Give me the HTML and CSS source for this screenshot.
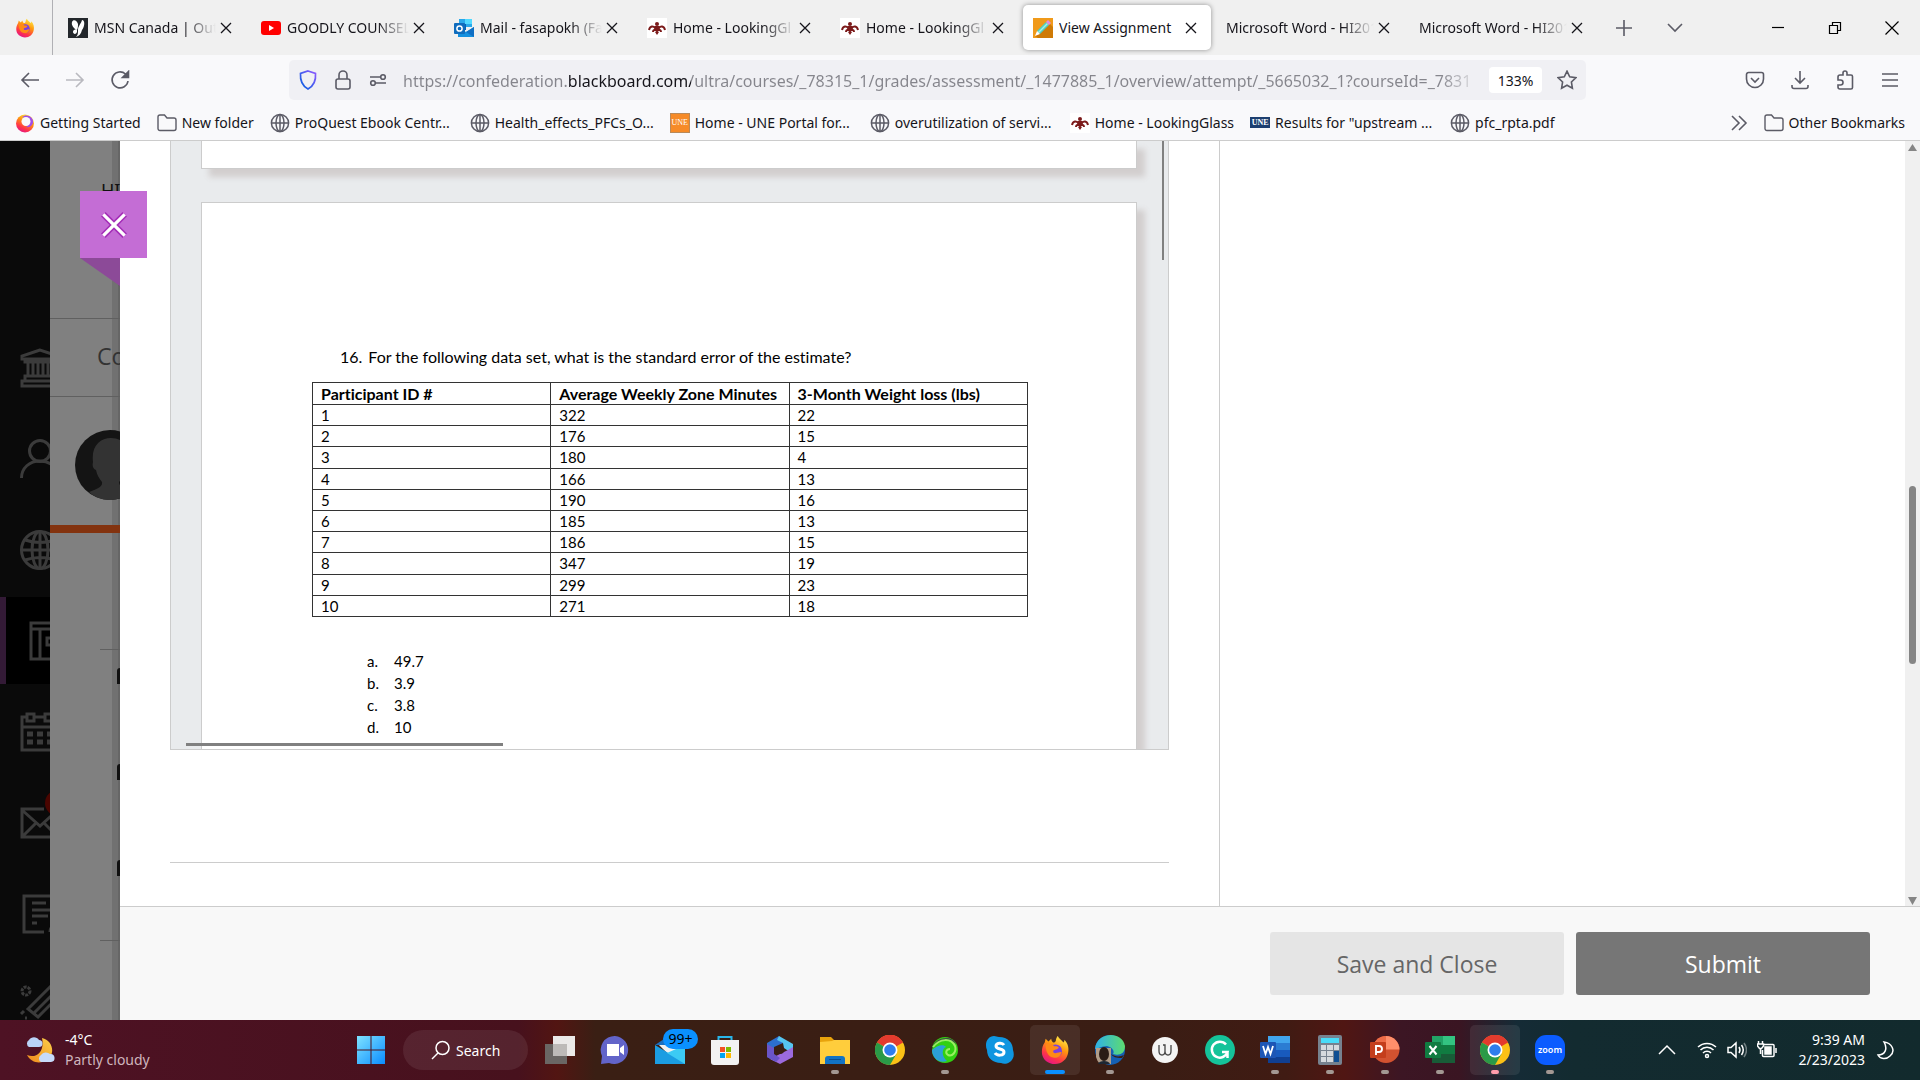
FILE: index.html
```html
<!DOCTYPE html>
<html lang="en">
  <head>
    <meta charset="utf-8" />
    <title>View Assignment</title>
    <link rel="stylesheet" href="styles.css">
  </head>
  <body>
    <!-- shared icons -->
    <svg class="sprite" aria-hidden="true">
      <defs>
        <linearGradient id="gFox" x1="0.8" y1="0" x2="0.3" y2="1">
          <stop offset="0" stop-color="#fff44f" />
          <stop offset="0.4" stop-color="#ff980e" />
          <stop offset="0.75" stop-color="#ff3647" />
          <stop offset="1" stop-color="#e31587" />
        </linearGradient>
        <linearGradient id="gShield" x1="0" y1="1" x2="1" y2="0">
          <stop offset="0" stop-color="#0060df" />
          <stop offset="1" stop-color="#9059ff" />
        </linearGradient>
        <linearGradient id="gWin" x1="0" y1="0" x2="1" y2="1">
          <stop offset="0" stop-color="#7fe3ff" />
          <stop offset="1" stop-color="#0a8cff" />
        </linearGradient>
        <linearGradient id="gWave" x1="0" y1="0" x2="1" y2="0">
          <stop offset="0" stop-color="#2fb0e6" />
          <stop offset="1" stop-color="#5ddc70" />
        </linearGradient>
        <linearGradient id="gMoon" x1="1" y1="0" x2="0" y2="1">
          <stop offset="0" stop-color="#fbd04a" />
          <stop offset="1" stop-color="#f08a1c" />
        </linearGradient>
      </defs>
      <symbol id="i-x" viewBox="0 0 20 20"><path d="M5 5l10 10M15 5L5 15" fill="none" stroke="currentColor" stroke-width="1.3" /></symbol>
      <symbol id="i-globe" viewBox="0 0 20 20">
        <g fill="none" stroke="#5b5b66" stroke-width="1.5"><circle cx="10" cy="10" r="8.6" /><ellipse cx="10" cy="10" rx="4" ry="8.6" /><path d="M1.5 10h17M10 1.5v17" /></g>
      </symbol>
      <symbol id="i-folder" viewBox="0 0 20 20"><path d="M1 4a2 2 0 0 1 2-2h4.500l2.500 3h7a2 2 0 0 1 2 2v8.500a2 2 0 0 1-2 2H3a2 2 0 0 1-2-2z" fill="none" stroke="#5b5b66" stroke-width="1.4" /></symbol>
      <symbol id="i-firefox" viewBox="0 0 32 32">
        <path d="M19 1c1 3 4 4 6 7 1-1 1-2 1-3 4 4 5 9 4 14-1 7-7 12-14 12S2 26 2 18c0-4 1-7 3-10l1-4 3 3 3-3c0 2 1 3 2 4 2 0 3-1 3-3 0-1 1-3 2-4z" fill="url(#gFox)" />
        <circle cx="16.500" cy="17" r="7" fill="#7a3fe0" />
        <path d="M6 10c4-2 8 0 9 2 2 0 4 0 5 1-1 3-5 2-6 4 0 2 2 3 4 2 3-1 5-1 5-1-1 5-5 7-9 6C8 23 6 16 6 10z" fill="#ff8a16" />
      </symbol>
      <symbol id="i-bird" viewBox="0 0 20 20">
        <path fill="#fff" d="M0 0h20v20H0z" />
        <circle cx="10" cy="6" r="2" fill="#7b1a1a" />
        <path fill="none" stroke="#7b1a1a" stroke-width="2" d="M2 12c1-4 4-5 8-1 4-4 7-3 8 1M6 14c0-2 2-3 4-1 2-2 4-1 4 1" />
        <path fill="#7b1a1a" d="M8 8h4l1 3-3 3-3-3zM8 14h4l-2 3z" />
      </symbol>
      <symbol id="i-chrome" viewBox="0 0 30 30">
        <circle cx="15" cy="15" r="15" fill="#fbc116" />
        <path d="M15 15L2 7.500A15 15 0 0 1 28 7.500z" fill="#e33b2e" />
        <path d="M15 7.500h13a15 15 0 0 0-26 0z" fill="#e33b2e" />
        <path d="M2 7.500A15 15 0 0 0 15 30l6.500-11.200L15 15z" fill="#2a9a48" />
        <circle cx="15" cy="15" r="7.500" fill="#fff" />
        <circle cx="15" cy="15" r="5.800" fill="#2f7ded" />
      </symbol>
    </svg>

    <header class="browser">
      <div class="tab-bar">
        <button class="firefox-view" aria-label="Firefox View"><svg class="ico20"><use href="#i-firefox" /></svg></button>
        <div class="tabs">
          <div class="tab">
            <svg class="ico20" viewBox="0 0 20 20"><path fill="#23272b" d="M0 0h20v20H0z" /><path fill="#fff" d="M9 12C6 11 3 7 4 4c1-3 5-2 6 2 0 2 0 4-1 6zM9 12c-2-1-4 0-4 2s3 3 4 0zM10 12c0-4 3-6 4-10 3 0 3 6 0 10-1 4-3 6-6 7 2-2 2-4 2-7z" /></svg>
            <button class="tab-title">MSN Canada | Outl</button>
            <button class="tab-close" aria-label="Close tab"><svg class="ico20"><use href="#i-x" /></svg></button>
          </div>
          <div class="tab">
            <svg class="ico20" viewBox="0 0 20 20"><rect y="3" width="20" height="14" rx="3" fill="#f00" /><path d="M8 7l5 3-5 3z" fill="#fff" /></svg>
            <button class="tab-title">GOODLY COUNSEL</button>
            <button class="tab-close" aria-label="Close tab"><svg class="ico20"><use href="#i-x" /></svg></button>
          </div>
          <div class="tab">
            <svg class="ico20" viewBox="0 0 20 20"><path d="M5 1h13v8H5z" fill="#28a8ea" /><path d="M11 1h7v5h-7z" fill="#50d9ff" /><path d="M5 6h7v6H5z" fill="#0364b8" /><path d="M4 9l8 5 8-5v10H4z" fill="#1490df" /><path d="M20 9v10l-8-5z" fill="#0f6fc4" /><rect y="5" width="11" height="11" rx="1" fill="#0f6cbd" /><circle cx="5.500" cy="10.500" r="2.600" fill="none" stroke="#fff" stroke-width="1.500" /></svg>
            <button class="tab-title">Mail - fasapokh (Fa</button>
            <button class="tab-close" aria-label="Close tab"><svg class="ico20"><use href="#i-x" /></svg></button>
          </div>
          <div class="tab">
            <svg class="ico20"><use href="#i-bird" /></svg>
            <button class="tab-title">Home - LookingGl</button>
            <button class="tab-close" aria-label="Close tab"><svg class="ico20"><use href="#i-x" /></svg></button>
          </div>
          <div class="tab">
            <svg class="ico20"><use href="#i-bird" /></svg>
            <button class="tab-title">Home - LookingGl</button>
            <button class="tab-close" aria-label="Close tab"><svg class="ico20"><use href="#i-x" /></svg></button>
          </div>
          <div class="tab active">
            <svg class="ico20" viewBox="0 0 20 20"><path fill="#f09a1a" d="M0 0h20v20H0z" /><path fill="#cf7a05" d="M17 6l3 3v11H5l-3-2z" /><path fill="#4fd0c4" d="M4 13L13 4l3 3-9 9z" /><path fill="#a8efe4" d="M5 14l9-9 1 1-9 9z" /><path fill="#e08adf" d="M13 4l2-2 3 3-2 2z" /><path fill="#fff" d="M4 13l3 3-5 2z" /></svg>
            <button class="tab-title">View Assignment</button>
            <button class="tab-close" aria-label="Close tab"><svg class="ico20"><use href="#i-x" /></svg></button>
          </div>
          <div class="tab">
            <button class="tab-title">Microsoft Word - HI201</button>
            <button class="tab-close" aria-label="Close tab"><svg class="ico20"><use href="#i-x" /></svg></button>
          </div>
          <div class="tab">
            <button class="tab-title">Microsoft Word - HI201</button>
            <button class="tab-close" aria-label="Close tab"><svg class="ico20"><use href="#i-x" /></svg></button>
          </div>
        </div>
        <div class="tab-tools">
          <button class="icon-btn" aria-label="New tab"><svg class="ico20" viewBox="0 0 20 20"><path d="M10 2v16M2 10h16" /></svg></button>
          <button class="icon-btn" aria-label="List all tabs"><svg class="ico20" viewBox="0 0 20 20"><path d="M3 6l7 7 7-7" /></svg></button>
        </div>
        <div class="window-tools">
          <button class="icon-btn" aria-label="Minimize"><svg class="ico20" viewBox="0 0 20 20"><path d="M4 9.500h12" /></svg></button>
          <button class="icon-btn" aria-label="Restore"><svg class="ico20" viewBox="0 0 20 20"><path d="M4.500 7.500h8v8h-8zM7.500 7V4.500h8v8H13" /></svg></button>
          <button class="icon-btn" aria-label="Close window"><svg class="ico20" viewBox="0 0 20 20"><path d="M3.500 3.500l13 13M16.500 3.500l-13 13" /></svg></button>
        </div>
      </div>

      <div class="nav-bar">
        <div class="nav-group">
          <button class="icon-btn" aria-label="Back"><svg class="ico20" viewBox="0 0 20 20"><path d="M19 10H2M9 3l-7 7 7 7" /></svg></button>
          <button class="icon-btn dim" aria-label="Forward"><svg class="ico20" viewBox="0 0 20 20"><path d="M1 10h17M11 3l7 7-7 7" /></svg></button>
          <button class="icon-btn" aria-label="Reload"><svg class="ico20" viewBox="0 0 20 20"><path d="M18 11a8 8 0 1 1-2.500-7l1.500 1.500" /><path class="solid" d="M18.500 1.500v6h-6z" /></svg></button>
        </div>
        <div class="url-bar">
          <svg class="ico20" viewBox="0 0 20 20"><path d="M10 1l7.500 2.500c.6 7-2 12.500-7.500 15.500C4.500 16 2 10.500 2.500 3.500z" fill="none" stroke="url(#gShield)" stroke-width="1.700" /></svg>
          <svg class="ico20 url-ico" viewBox="0 0 20 20"><rect x="3" y="9" width="14" height="10" rx="2" /><path d="M6 9V5a4 4 0 0 1 8 0v4" /></svg>
          <svg class="ico20 url-ico" viewBox="0 0 20 20"><path d="M2 7h10M8 13h10" /><circle cx="15" cy="7" r="2.300" /><circle cx="5" cy="13" r="2.300" /></svg>
          <input class="url" type="text" aria-label="Address" value="https://confederation.blackboard.com/ultra/courses/_78315_1/grades/assessment/_1477885_1/overview/attempt/_5665032_1?courseId=_7831" />
          <button class="zoom-level">133%</button>
          <button class="icon-btn" aria-label="Bookmark"><svg class="ico20" viewBox="0 0 20 20"><path d="M10 1.200l2.700 5.600 6.100.9-4.400 4.300 1 6.200-5.400-3-5.400 3 1-6.200L1.200 7.700l6.100-.9z" /></svg></button>
        </div>
        <div class="nav-group end">
          <button class="icon-btn" aria-label="Pocket"><svg class="ico20" viewBox="0 0 20 20"><path d="M3.500 2.500h13a2 2 0 0 1 2 2V9a8.500 8.500 0 0 1-17 0V4.500a2 2 0 0 1 2-2z" /><path d="M6 8l4 4 4-4" /></svg></button>
          <button class="icon-btn" aria-label="Downloads"><svg class="ico20" viewBox="0 0 20 20"><path d="M10 1v12M5 8l5 5 5-5M2 15v1.500a2 2 0 0 0 2 2h12a2 2 0 0 0 2-2V15" /></svg></button>
          <button class="icon-btn" aria-label="Extensions"><svg class="ico20" viewBox="0 0 20 20"><path d="M3 9V7a2 2 0 0 1 2-2h3V3a2 2 0 0 1 4 0v2h4a1.500 1.500 0 0 1 1.500 1.500v11A1.500 1.500 0 0 1 16 19H5a2 2 0 0 1-2-2v-2h2.500a2.500 2.500 0 0 0 0-5H3z" /></svg></button>
          <button class="icon-btn" aria-label="Menu"><svg class="ico20" viewBox="0 0 20 20"><path d="M2 4h16M2 10h16M2 16h16" /></svg></button>
        </div>
      </div>

      <nav class="bookmarks">
        <a href="#"><svg class="ico20" viewBox="0 0 20 20"><circle cx="10" cy="10.500" r="9" fill="url(#gFox)" /><path d="M7 4c5-4 12 0 11 6-1 3-4 5-7 4 3-1 5-7-4-10z" fill="#a04de8" /><circle cx="11" cy="8.500" r="4.500" fill="#f9f9fb" /></svg><span>Getting Started</span></a>
        <a href="#"><svg class="ico20"><use href="#i-folder" /></svg><span>New folder</span></a>
        <a class="clipped" href="#"><svg class="ico20"><use href="#i-globe" /></svg><span>ProQuest Ebook Centr...</span></a>
        <a class="clipped" href="#"><svg class="ico20"><use href="#i-globe" /></svg><span>Health_effects_PFCs_O...</span></a>
        <a class="clipped" href="#"><b class="une orange">UNE</b><span>Home - UNE Portal for...</span></a>
        <a class="clipped" href="#"><svg class="ico20"><use href="#i-globe" /></svg><span>overutilization of servi...</span></a>
        <a href="#"><svg class="ico20"><use href="#i-bird" /></svg><span>Home - LookingGlass</span></a>
        <a class="clipped" href="#"><b class="une blue">UNE</b><span>Results for "upstream ...</span></a>
        <a href="#"><svg class="ico20"><use href="#i-globe" /></svg><span>pfc_rpta.pdf</span></a>
        <button class="icon-btn more" aria-label="More bookmarks"><svg class="ico20" viewBox="0 0 20 20"><path d="M3 3l7 7-7 7M10 3l7 7-7 7" /></svg></button>
        <a class="last" href="#"><svg class="ico20"><use href="#i-folder" /></svg><span>Other Bookmarks</span></a>
      </nav>
    </header>

    <div class="page">
      <nav class="side-nav">
        <a href="#" aria-label="Institution"><svg viewBox="0 0 40 40"><path d="M20 2L2 8v3h36V8zM5 12v2h30v-2M8 14v13M13 14v13M18 14v13M23 14v13M28 14v13M32 14v13M5 33v-5h30v5M2 38v-5h36v5z" /></svg></a>
        <a href="#" aria-label="Profile"><svg viewBox="0 0 40 40"><circle cx="20" cy="12" r="10.500" /><path d="M1.500 39c0-10 8-17 18.500-17s18.500 7 18.500 17" /></svg></a>
        <a href="#" aria-label="Activity"><svg viewBox="0 0 40 40"><circle cx="20" cy="20" r="18.500" /><ellipse cx="20" cy="20" rx="8" ry="18.500" /><path d="M20 1v38M1 20h38M5 10q15 5 30 0M5 30q15-5 30 0" /></svg></a>
        <a class="current" href="#" aria-label="Courses"><svg viewBox="0 0 40 40"><path d="M11 2h40v36H11zM11 8h30M20 8v30M40 17H27v7h13" /></svg></a>
        <a href="#" aria-label="Calendar"><svg viewBox="0 0 40 40"><path d="M6 5H2v33h36V5M15 5h9M2 15h36M7 2h7v7H7zM25 2h7v7h-7z" /><path stroke-width="5" d="M7 22h6M17 22h6M27 22h6M7 30h6M17 30h6M27 30h6" /></svg></a>
        <a href="#" aria-label="Messages"><svg viewBox="0 0 40 40"><path d="M24 6H2v28h36V6M2 7l18 16L38 7M2 34l14-14M38 34L24 20" /><circle class="badge-dot" cx="38" cy="0" r="13" /></svg></a>
        <a href="#" aria-label="Grades"><svg viewBox="0 0 40 40"><path d="M24 38H4V2h30v28M12 9h14M12 16h18M12 22h16M12 29h5M30 38q0-5 5-7" /></svg></a>
        <a href="#" aria-label="Tools"><svg viewBox="0 0 40 40"><circle cx="6" cy="6" r="4" stroke-dasharray="3 1" /><path d="M8 24L30 2l10 8-22 22zM13 29L36 6M1 29l3-3M5 33h2" /></svg></a>
      </nav>

      <div class="course-peek">
        <div class="peek-title">HI</div>
        <div class="peek-tab">Co</div>
        <div class="peek-user"><svg viewBox="0 0 70 70"><circle cx="35" cy="35" r="35" fill="#141414" /><path d="M14 62c8-3 14-5 13-10-3-4-5-7-6-12-3-1-4-4-3-8C16 16 25 8 36 8s20 8 17 24c1 5 0 7-3 8-1 5-3 8-6 12 0 5 6 8 12 10-12 10-30 11-42 0z" fill="#333" /></svg></div>
        <div class="peek-list">
          <i></i><i></i><i></i>
        </div>
      </div>

      <main class="panel">
        <button class="panel-close" aria-label="Close"><svg viewBox="0 0 28 28"><path class="edge" d="M4 4l20 20M24 4L4 24" /><path d="M4 4l20 20M24 4L4 24" /></svg></button>
        <div class="panel-body">
          <section class="attempt">
            <div class="viewer">
              <div class="sheet prev"></div>
              <div class="sheet">
                <p class="question"><span>16.</span><span>For the following data set, what is the standard error of the estimate?</span></p>
                <table>
                  <thead>
                    <tr><th>Participant ID #</th><th>Average Weekly Zone Minutes</th><th>3-Month Weight loss (lbs)</th></tr>
                  </thead>
                  <tbody>
                    <tr><td>1</td><td>322</td><td>22</td></tr>
                    <tr><td>2</td><td>176</td><td>15</td></tr>
                    <tr><td>3</td><td>180</td><td>4</td></tr>
                    <tr><td>4</td><td>166</td><td>13</td></tr>
                    <tr><td>5</td><td>190</td><td>16</td></tr>
                    <tr><td>6</td><td>185</td><td>13</td></tr>
                    <tr><td>7</td><td>186</td><td>15</td></tr>
                    <tr><td>8</td><td>347</td><td>19</td></tr>
                    <tr><td>9</td><td>299</td><td>23</td></tr>
                    <tr><td>10</td><td>271</td><td>18</td></tr>
                  </tbody>
                </table>
                <ul class="answers">
                  <li><span>a.</span><span>49.7</span></li>
                  <li><span>b.</span><span>3.9</span></li>
                  <li><span>c.</span><span>3.8</span></li>
                  <li><span>d.</span><span>10</span></li>
                </ul>
              </div>
              <div class="thumb-v"></div>
              <div class="thumb-h"></div>
            </div>
            <hr />
          </section>
          <aside class="details"></aside>
          <div class="scrollbar">
            <svg viewBox="0 0 15 14"><path d="M7.500 3l4.500 7H3z" /></svg>
            <div class="scroll-thumb"></div>
            <svg viewBox="0 0 15 14"><path d="M3 5h9l-4.500 8z" /></svg>
          </div>
        </div>
        <footer class="panel-footer">
          <button class="btn">Save and Close</button>
          <button class="btn primary">Submit</button>
        </footer>
      </main>
    </div>

    <footer class="taskbar">
      <button class="weather">
        <svg viewBox="0 0 30 28"><path d="M17 2c9 2 13 12 8 19s-18 8-23-2c9 4 18-3 15-17z" fill="url(#gMoon)" /><path d="M4 11a4 4 0 0 1 0-7 6 6 0 0 1 10 0 3.500 3.500 0 0 1 0 7z" fill="#b9d3f7" /><path d="M16 26a4 4 0 0 1 0-7 6 6 0 0 1 9-1 4 4 0 0 1 1 8z" fill="#c6dbfa" /></svg>
        <span><b>-4°C</b><span>Partly cloudy</span></span>
      </button>

      <div class="apps">
        <button class="app" aria-label="Start"><svg viewBox="0 0 30 30"><path fill="url(#gWin)" d="M1 1h13.500v13.500H1zM15.500 1H29v13.500H15.500zM1 15.500h13.500V29H1zM15.500 15.500H29V29H15.500z" /></svg></button>
        <button class="search"><svg class="ico20" viewBox="0 0 20 20"><circle cx="11.500" cy="8" r="6.500" /><path d="M7 13l-6 6" /></svg>Search</button>
        <button class="app" aria-label="Task view"><svg viewBox="0 0 30 30"><path fill="#6a6664" d="M0 9h22v20H0z" /><path fill="#ebe9e8" d="M8 1h22v20H8z" /><path fill="#bdbab8" d="M8 9h14v12H8z" /></svg></button>
        <button class="app" aria-label="Chat"><svg viewBox="0 0 30 30"><path fill="#6264c9" d="M15 1a14 14 0 1 1-6 27L1 29l1-8A14 14 0 0 1 15 1z" /><path fill="#fff" d="M7 9h12v12H7zM20 13l4-3v10l-4-3z" /></svg></button>
        <button class="app" aria-label="Mail"><svg viewBox="0 0 30 30"><path fill="#1a6fc0" d="M0 10L15 0l15 10z" /><path fill="#f1f1f1" d="M4 10h22l-11 11z" /><path fill="#1b9de2" d="M0 10l15 9 15-9v19H0z" /><path fill="#3ccbf4" d="M30 10v19L12 18z" /></svg><span class="count">99+</span></button>
        <button class="app" aria-label="Store"><svg viewBox="0 0 30 30"><path fill="none" stroke="#29b6ea" stroke-width="2" d="M8.500 7V2h13v5" /><path fill="#f2f2f2" d="M1 5h28v22a3 3 0 0 1-3 3H4a3 3 0 0 1-3-3z" /><path fill="#f25022" d="M10 12h5v5h-5z" /><path fill="#7fba00" d="M16 12h5v5h-5z" /><path fill="#00a4ef" d="M10 18h5v5h-5z" /><path fill="#ffb900" d="M16 18h5v5h-5z" /></svg></button>
        <button class="app" aria-label="Microsoft 365"><svg viewBox="0 0 30 30"><path fill="#2c6fd0" d="M14 1L2 8v14l7 4V12l9-4z" /><path fill="#55c5f0" d="M14 1l14 8v10l-9-6-1-5-6-3z" /><path fill="#9c6ade" d="M28 12v10l-13 7-10-5 10-5 8-4z" /><path fill="#6a55c8" d="M2 9l7 4v6l6 4-4 4-9-5z" /><circle cx="15" cy="15" r="4" fill="#3a1f14" /></svg></button>
        <button class="app" aria-label="File Explorer"><svg viewBox="0 0 30 30"><path fill="#e8a30c" d="M0 2h11l3 3v6H0z" /><path fill="#ffcd3c" d="M0 7l12-1 2-1h16v24H0z" /><path fill="#1273c4" d="M5 29v-5a3 3 0 0 1 3-3h14a3 3 0 0 1 3 3v5z" /><path fill="#0a4f92" d="M9 24h12v1H9z" /></svg><i class="dot"></i></button>
        <button class="app" aria-label="Chrome"><svg><use href="#i-chrome" /></svg></button>
        <button class="app" aria-label="Webroot"><svg viewBox="0 0 30 30"><circle cx="15" cy="15" r="13" fill="#31d012" /><path fill="#3f4b45" d="M2 14C4 2 22-1 26 9c-8-6-17-4-24 5z" /><path fill="#2b9fd8" d="M2 15c5-5 12-6 14-3-4 1-5 9 1 14-8 3-15-3-15-11z" /><path d="M3 12C10 3 21 3 25 11c2 6-3 11-7 9-3-2-2-6 2-6" fill="none" stroke="#9aef62" stroke-width="2" /></svg><i class="dot"></i></button>
        <button class="app" aria-label="Skype"><svg viewBox="0 0 30 30"><path fill="#0f96e0" d="M9 1c2 0 3 1 5 1 9 0 14 6 14 13 1 3 1 6 0 8-2 5-8 7-12 5C8 28 2 23 2 15-1 8 3 1 9 1z" /><path d="M19 10c-2-3-8-2-8 1 0 4 8 2 8 6 0 4-7 4-9 1" fill="none" stroke="#fff" stroke-width="3" /></svg></button>
        <button class="app open" aria-label="Firefox"><svg><use href="#i-firefox" /></svg><i class="dot wide"></i></button>
        <button class="app" aria-label="Edge"><svg viewBox="0 0 30 30"><circle cx="15" cy="15" r="15" fill="#1560b4" /><path fill="url(#gWave)" d="M0 14C1-3 27-5 30 11c0 8-6 10-12 8 2-3-1-7-6-8-6 0-9 3-12 3z" /><path fill="#3a1f14" d="M16 19c4 3 9 3 13 1l-2 3c-6 0-9-1-11-4z" /><path fill="#b09c88" d="M1 13h15v16H5a15 15 0 0 1-4-7z" /><ellipse cx="9" cy="19" rx="5" ry="7" fill="#2a1c16" /><path fill="#1d2733" d="M3 29c1-4 11-4 12 0z" /></svg><i class="dot"></i></button>
        <button class="app" aria-label="Wattpad"><svg viewBox="0 0 30 30"><circle cx="15" cy="15" r="13" fill="#f4f4f4" /><path d="M9 10v6q0 4 3 4t3-4v-6M13 10h2v6q0 4 3 4t3-4v-6" fill="none" stroke="#444" stroke-width="1.300" /></svg></button>
        <button class="app" aria-label="Grammarly"><svg viewBox="0 0 30 30"><circle cx="15" cy="15" r="15" fill="#15c39a" /><path d="M21 9.500A8 8 0 1 0 22.500 17H17M22.500 17v6" fill="none" stroke="#fff" stroke-width="2.500" /></svg></button>
        <button class="app" aria-label="Word"><svg viewBox="0 0 30 30"><path fill="#41a5ee" d="M8 1h22v7H8z" /><path fill="#2b7cd3" d="M8 8h22v7H8z" /><path fill="#185abd" d="M8 15h22v7H8z" /><path fill="#103f91" d="M8 22h22v6H8z" /><rect y="7" width="16" height="16" rx="1" fill="#1d56b5" /><path d="M3 11l2.500 8L8 12l2.500 7 2.500-8" fill="none" stroke="#fff" stroke-width="1.800" /></svg><i class="dot"></i></button>
        <button class="app" aria-label="Calculator"><svg viewBox="0 0 30 30"><rect x="3" width="24" height="30" rx="2" fill="#76828f" /><path fill="#49dcf8" d="M6 3h18v5H6z" /><path fill="#d5dade" d="M6 10h5v5H6zM12 10h6v5h-6zM19 10h5v5h-5zM6 16h5v5H6zM12 16h6v5h-6zM6 22h5v5H6zM12 22h6v5h-6z" /><path fill="#0f4f93" d="M19 16h5v11h-5z" /></svg><i class="dot"></i></button>
        <button class="app" aria-label="PowerPoint"><svg viewBox="0 0 30 30"><circle cx="16" cy="14.500" r="13.500" fill="#d35230" /><path fill="#ff8f6b" d="M16 1a13.500 13.500 0 0 1 13.500 13.500H16z" /><path fill="#ed6c47" d="M16 1v13.500H2.500A13.500 13.500 0 0 1 16 1z" /><rect y="7" width="16" height="16" rx="1" fill="#c43e1c" /><path d="M6 20v-9h3q3 0 3 3t-3 3H6" fill="none" stroke="#fff" stroke-width="1.900" /></svg><i class="dot"></i></button>
        <button class="app" aria-label="Excel"><svg viewBox="0 0 30 30"><path fill="#21a366" d="M7 1h11v9H7z" /><path fill="#33c481" d="M18 1h12v9H18z" /><path fill="#107c41" d="M7 10h23v9H7z" /><path fill="#185c37" d="M7 19h23v9H7z" /><rect y="7" width="16" height="16" rx="1" fill="#107c41" /><path d="M4.500 11l7 8.500M11.500 11l-7 8.500" fill="none" stroke="#fff" stroke-width="2" /></svg><i class="dot"></i></button>
        <button class="app open" aria-label="Chrome"><svg><use href="#i-chrome" /></svg><i class="dot pink"></i></button>
        <button class="app zoom-app"><span>zoom</span><i class="dot"></i></button>
      </div>

      <div class="tray">
        <button aria-label="Hidden icons"><svg class="ico20" viewBox="0 0 20 20"><path d="M2 14l8-8 8 8" /></svg></button>
        <button class="status" aria-label="Network, volume, battery">
          <svg class="ico20" viewBox="0 0 20 20"><path d="M1 7a13 13 0 0 1 18 0M3.500 10a9 9 0 0 1 13 0M6 13a5.500 5.500 0 0 1 8 0" /><circle cx="10" cy="16" r="1.500" /></svg>
          <svg class="ico20" viewBox="0 0 20 20"><path d="M1 7.500h3L9 3v14l-5-4.500H1zM12 7q2 3 0 6M14.500 5q3.500 5 0 10" /><path opacity="0.4" d="M17 3q5 7 0 14" /></svg>
          <svg class="ico20" viewBox="0 0 20 20"><path d="M7 4.500h9a1 1 0 0 1 1 1v10a1 1 0 0 1-1 1H6.500a1 1 0 0 1-1-1V10M19 8v5M1.500 1v3M5.500 1v3M.5 4h6v2l-2 2.500h-2L.5 6zM3.500 8v6" /><path fill="#fff" d="M8 7h6v7H8z" /></svg>
        </button>
        <button class="clock">9:39 AM<br />2/23/2023</button>
        <button aria-label="Focus"><svg class="ico20" viewBox="0 0 20 20"><path d="M9 2c8 1 12 9 6 14-4 4-10 3-12-1 7 0 10-6 6-13z" /></svg></button>
      </div>
    </footer>
  </body>
</html>
```

FILE: styles.css
```css
* {
  box-sizing: border-box;
}
body {
  margin: 0;
  height: 100vh;
  display: flex;
  flex-direction: column;
  overflow: hidden;
  font-family: "Noto Sans", sans-serif;
  font-size: 14px;
  color: #15141a;
  background-color: #fff;
}
button {
  font: inherit;
  color: inherit;
  background: none;
  border: none;
  padding: 0;
  cursor: pointer;
}
a {
  color: inherit;
  text-decoration: none;
}
.sprite {
  position: absolute;
  width: 0;
  height: 0;
}
.ico20 {
  width: 20px;
  height: 20px;
  flex: none;
  display: block;
}
.icon-btn {
  display: flex;
  justify-content: center;
  align-items: center;
}
.icon-btn path {
  fill: none;
  stroke: #5b5b66;
  stroke-width: 1.6;
}
.icon-btn .solid {
  fill: #5b5b66;
}
.dim {
  opacity: 0.4;
}

/* browser chrome */
.browser {
  flex: none;
  background-color: #f9f9fb;
  border-bottom: 1px solid #ccc;
}
.tab-bar {
  display: flex;
  height: 55px;
  background-color: #f0f0f0;
}
.firefox-view {
  width: 53px;
  padding-left: 15px;
  border-right: 1px solid #b0b0b4;
}
.tabs {
  display: flex;
  align-items: center;
  gap: 5px;
  padding-left: 5px;
}
.tab {
  display: flex;
  align-items: center;
  gap: 6px;
  width: 188px;
  height: 45px;
  padding: 0 10px;
  border-radius: 5px;
}
.tab.active {
  background-color: #fff;
  box-shadow: 0 0 5px rgba(0, 0, 0, 0.4);
}
.tab-title {
  flex: 1;
  min-width: 0;
  text-align: left;
  white-space: nowrap;
  overflow: hidden;
  margin-right: -6px;
  mask-image: linear-gradient(to left, transparent 0, #000 32px);
}
.tab.active .tab-title {
  mask-image: none;
}
.tab-tools,
.window-tools {
  display: flex;
}
.tab-tools {
  padding-left: 7px;
  gap: 11px;
}
.tab-tools .icon-btn {
  width: 40px;
}
.window-tools {
  margin-left: auto;
}
.window-tools .icon-btn {
  width: 57px;
}
.window-tools path {
  stroke: #000;
  stroke-width: 1.2;
}
.nav-bar {
  display: flex;
  padding: 5px 0;
}
.nav-group {
  display: flex;
  gap: 25px;
  padding-left: 20px;
}
.nav-group.end {
  margin-left: auto;
  padding: 0 20px 0 0;
}
.url-bar {
  flex: 0 1 1297px;
  display: flex;
  align-items: center;
  gap: 15px;
  height: 40px;
  margin-left: 159px;
  padding: 0 9px;
  border-radius: 5px;
  background-color: #f0f0f4;
}
.url-ico {
  fill: none;
  stroke: #5b5b66;
  stroke-width: 1.6;
}
.url {
  flex: 1;
  min-width: 0;
  margin-right: -6px;
  padding: 2px 0 0;
  border: none;
  outline: none;
  font: inherit;
  font-size: 16px;
  /* the domain is drawn darker than the rest of the address */
  color: transparent;
  background: linear-gradient(90deg, #85858c 166px, #15141a 166px, #15141a 288px, #85858c 288px);
  background-clip: text;
  -webkit-background-clip: text;
  mask-image: linear-gradient(to left, transparent 0, #000 40px);
}
.zoom-level {
  width: 53px;
  height: 26px;
  border-radius: 4px;
  background-color: #fff;
}
.bookmarks {
  display: flex;
  align-items: center;
  height: 35px;
  padding: 0 15px;
}
.bookmarks a {
  display: flex;
  align-items: center;
  gap: 5px;
  margin-right: 16px;
  white-space: nowrap;
}
.bookmarks .clipped {
  flex: 0 1 184px;
}
.bookmarks .more {
  margin-left: auto;
  margin-right: 15px;
}
.bookmarks .last {
  margin-right: 0;
}
.une {
  width: 20px;
  flex: none;
  text-align: center;
  font-family: "Liberation Serif", serif;
  font-size: 8px;
  color: #fff;
}
.une.orange {
  line-height: 18px;
  font-weight: 400;
  background-color: #f68b28;
  border: 1px solid #b98a5a;
}
.une.blue {
  line-height: 11px;
  background-color: #1d3f70;
}

/* dimmed page behind the panel */
.page {
  flex: 1;
  min-height: 0;
  display: flex;
}
.side-nav {
  flex: 0 0 50px;
  display: flex;
  flex-direction: column;
  gap: 4px;
  padding-top: 183px;
  overflow: hidden;
  background-color: #0a0a0a;
}
.side-nav a {
  flex: 0 0 87px;
  display: flex;
  align-items: center;
  padding-left: 20px;
}
.side-nav a.current {
  background-color: #000;
  border-left: 6px solid #331a36;
  padding-left: 14px;
}
.side-nav svg {
  flex: 0 0 40px;
  height: 40px;
  overflow: visible;
  fill: none;
  stroke: #3b3b3b;
  stroke-width: 3;
}
.side-nav .badge-dot {
  fill: #4a0500;
  stroke: none;
}
.course-peek {
  flex: 0 0 70px;
  overflow: hidden;
  background: linear-gradient(90deg, #808080 62px, #717171 62px, #717171 68px, #666 68px);
}
.peek-title {
  height: 178px;
  padding: 37px 0 0 51px;
  border-bottom: 1px solid #606060;
  font-size: 18px;
  line-height: 24px;
  color: #111;
}
.peek-tab {
  height: 78px;
  padding-left: 47px;
  border-bottom: 1px solid #606060;
  font-family: "Open Sans", sans-serif;
  font-size: 23px;
  line-height: 74px;
  color: #333;
}
.peek-user {
  height: 136px;
  padding: 33px 0 0 25px;
  border-bottom: 8px solid #83330f;
}
.peek-user svg {
  width: 70px;
  height: 70px;
}
.peek-list {
  display: flex;
  flex-direction: column;
  gap: 80px;
  height: 292px;
  margin: 116px 0 0 50px;
  padding: 18px 0 0 17px;
  border-top: 1px solid #606060;
  border-bottom: 1px solid #606060;
}
.peek-list i {
  height: 16px;
  border-radius: 6px 0 0 0;
  background-color: #111;
}

/* assignment panel */
.panel {
  flex: 1;
  min-width: 0;
  position: relative;
  display: flex;
  flex-direction: column;
  background-color: #fff;
}
.panel-close {
  position: absolute;
  top: 50px;
  left: -40px;
  width: 67px;
  height: 67px;
  display: flex;
  justify-content: center;
  align-items: center;
  background-color: #c46dd5;
}
.panel-close:after {
  content: "";
  position: absolute;
  top: 67px;
  left: 0;
  width: 40px;
  height: 28px;
  background-color: #8c4a98;
  clip-path: polygon(0 0, 100% 0, 100% 100%);
}
.panel-close svg {
  width: 30px;
  height: 30px;
}
.panel-close path {
  fill: none;
  stroke: #fff;
  stroke-width: 3;
}
.panel-close .edge {
  stroke: #a52fb8;
  stroke-width: 6;
}
.panel-body {
  flex: 1;
  min-height: 0;
  display: flex;
}
.attempt {
  flex: 0 0 61.1%;
  display: flex;
  flex-direction: column;
  padding: 0 50px 43px;
  border-right: 1px solid #ccc;
}
.attempt hr {
  width: 100%;
  margin: 112px 0 0;
  border: none;
  border-top: 1px solid #ccc;
}
.viewer {
  flex: 1;
  min-height: 0;
  position: relative;
  overflow: hidden;
  padding: 0 31px 0 30px;
  border: 1px solid #ccc;
  border-top: none;
  background-color: #e9ebed;
}
.sheet {
  padding: 143px 108px 20px 110px;
  border: 1px solid #ccc;
  background-color: #fff;
  box-shadow: 8px 8px 6px #d2cece;
  font-family: Lato, sans-serif;
  font-size: 15px;
  font-variant-ligatures: none;
  line-height: 22px;
  color: #000;
}
.sheet.prev {
  height: 28px;
  margin-bottom: 33px;
  padding: 0;
  border-top: none;
}
.question {
  display: flex;
  gap: 6px;
  margin: 0 0 14px 28px;
  font-size: 16px;
}
.sheet table {
  width: 100%;
  height: 235px;
  table-layout: fixed;
  border-collapse: collapse;
  line-height: 18px;
}
.sheet th,
.sheet td {
  padding: 0 8px;
  border: 1px solid #333;
  text-align: left;
}
.sheet th {
  height: 22px;
  font-size: 16px;
  white-space: nowrap;
}
.answers {
  list-style: none;
  margin: 33px 0 0;
  padding: 0 0 0 55px;
}
.answers li {
  display: grid;
  grid-template-columns: 27px 1fr;
}
.thumb-v,
.thumb-h {
  position: absolute;
  background-color: #808080;
}
.thumb-v {
  top: 0;
  right: 4px;
  width: 2px;
  height: 119px;
}
.thumb-h {
  left: 15px;
  bottom: 3px;
  width: 317px;
  height: 3px;
}
.details {
  flex: 1;
}
.scrollbar {
  flex: 0 0 15px;
  display: flex;
  flex-direction: column;
  align-items: center;
  background-color: #f0f0f0;
}
.scrollbar svg {
  width: 15px;
  height: 14px;
  fill: #858585;
}
.scroll-thumb {
  width: 7px;
  height: 178px;
  margin: 331px 0 auto;
  border-radius: 4px;
  background-color: #858585;
}
.panel-footer {
  display: flex;
  justify-content: flex-end;
  gap: 12px;
  padding: 25px 50px;
  border-top: 1px solid #ccc;
  background-color: #f8f8f8;
}
.btn {
  width: 294px;
  height: 63px;
  border-radius: 3px;
  background-color: #e5e5e5;
  font-family: "Open Sans", sans-serif;
  font-size: 23px;
  color: #666;
}
.btn.primary {
  background-color: #767676;
  color: #fff;
}

/* taskbar */
.taskbar {
  flex: none;
  display: flex;
  align-items: center;
  height: 60px;
  padding: 0 25px;
  color: #fff;
  background: linear-gradient(90deg, #4e1224 0, #47111d 27%, #521512 29%, #3a1f14 31%, #3a1d14 60%, #401b13 67%, #501613 70%, #3c1624 73%, #3a1522 76%, #152b36 79%, #132b30 82%, #122a2d 100%);
}
.weather {
  display: flex;
  align-items: center;
  gap: 10px;
  width: 321px;
  text-align: left;
  line-height: 20px;
}
.weather svg {
  width: 30px;
  height: 28px;
}
.weather b {
  display: block;
  font-weight: 400;
}
.weather span span {
  color: #cfb5bd;
}
.apps {
  display: flex;
  align-items: center;
  gap: 5px;
}
.app {
  position: relative;
  width: 50px;
  height: 50px;
  display: flex;
  justify-content: center;
  align-items: center;
  border-radius: 5px;
}
.app.open {
  background-color: rgba(255, 255, 255, 0.08);
}
.app svg {
  width: 30px;
  height: 30px;
}
.dot {
  position: absolute;
  bottom: 1px;
  width: 8px;
  height: 4px;
  border-radius: 2px;
  background-color: #a39893;
}
.dot.wide {
  width: 20px;
  background-color: #0a90ff;
}
.dot.pink {
  background-color: #ff9cab;
}
.count {
  position: absolute;
  top: 4px;
  left: 18px;
  width: 35px;
  height: 20px;
  border-radius: 10px;
  line-height: 20px;
  color: #000;
  background-color: #0a90ff;
}
.search {
  display: flex;
  align-items: center;
  gap: 5px;
  width: 125px;
  height: 40px;
  margin: 0 2px;
  padding-left: 28px;
  border-radius: 20px;
  background-color: rgba(255, 255, 255, 0.08);
}
.search svg,
.tray svg {
  fill: none;
  stroke: #fff;
  stroke-width: 1.5;
}
.zoom-app span {
  width: 30px;
  border-radius: 11px;
  line-height: 30px;
  font-size: 9px;
  font-weight: 600;
  background-color: #0b5cff;
}
.tray {
  display: flex;
  align-items: center;
  gap: 20px;
  margin-left: auto;
}
.status {
  display: flex;
  gap: 10px;
}
.clock {
  width: 68px;
  line-height: 20px;
  text-align: right;
}
.tray button:last-child {
  margin-left: -10px;
}
```
